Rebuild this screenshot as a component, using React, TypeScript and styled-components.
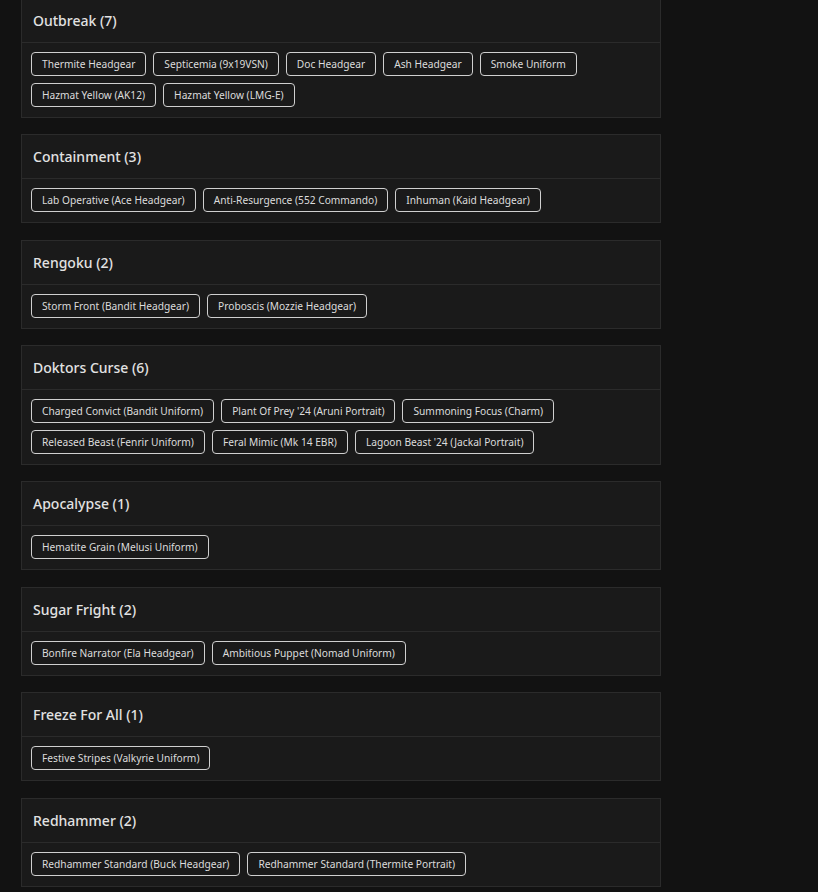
import styled, { createGlobalStyle } from 'styled-components';

const GlobalStyle = createGlobalStyle`
  html, body {
    margin: 0;
    padding: 0;
    background: #121212;
  }
  body {
    font-family: 'Noto Sans', 'DejaVu Sans', sans-serif;
    color: #e4e4e4;
  }
`;

const events = [
  {
    name: 'Outbreak',
    items: [
      'Thermite Headgear',
      'Septicemia (9x19VSN)',
      'Doc Headgear',
      'Ash Headgear',
      'Smoke Uniform',
      'Hazmat Yellow (AK12)',
      'Hazmat Yellow (LMG-E)',
    ],
  },
  {
    name: 'Containment',
    items: [
      'Lab Operative (Ace Headgear)',
      'Anti-Resurgence (552 Commando)',
      'Inhuman (Kaid Headgear)',
    ],
  },
  {
    name: 'Rengoku',
    items: ['Storm Front (Bandit Headgear)', 'Proboscis (Mozzie Headgear)'],
  },
  {
    name: 'Doktors Curse',
    items: [
      'Charged Convict (Bandit Uniform)',
      "Plant Of Prey '24 (Aruni Portrait)",
      'Summoning Focus (Charm)',
      'Released Beast (Fenrir Uniform)',
      'Feral Mimic (Mk 14 EBR)',
      "Lagoon Beast '24 (Jackal Portrait)",
    ],
  },
  {
    name: 'Apocalypse',
    items: ['Hematite Grain (Melusi Uniform)'],
  },
  {
    name: 'Sugar Fright',
    items: ['Bonfire Narrator (Ela Headgear)', 'Ambitious Puppet (Nomad Uniform)'],
  },
  {
    name: 'Freeze For All',
    items: ['Festive Stripes (Valkyrie Uniform)'],
  },
  {
    name: 'Redhammer',
    items: [
      'Redhammer Standard (Buck Headgear)',
      'Redhammer Standard (Thermite Portrait)',
    ],
  },
];

const Page = styled.div`
  width: 640px;
  margin: -2px 0 0 21px;
  display: flex;
  flex-direction: column;
  gap: 16.5px;
`;

const Card = styled.section`
  background: #1a1a1a;
  border: 1px solid #2b2b2b;
`;

const CardHeader = styled.div`
  height: 43px;
  display: flex;
  align-items: center;
  padding: 0 11px;
  border-bottom: 1px solid #2b2b2b;
  font-size: 14px;
  font-weight: 500;
  color: #e2e2e2;
`;

const CardBody = styled.div`
  display: flex;
  flex-wrap: wrap;
  gap: 6.5px 7px;
  padding: 9px 9px 10px;
`;

const Chip = styled.span`
  box-sizing: border-box;
  height: 24px;
  display: inline-flex;
  align-items: center;
  padding: 0 10px;
  border: 1px solid #d0d0d0;
  border-radius: 4px;
  font-size: 10.2px;
  color: #dcdcdc;
  white-space: nowrap;
`;

export default function App() {
  return (
    <>
      <GlobalStyle />
      <Page>
        {events.map((ev) => (
          <Card key={ev.name}>
            <CardHeader>
              {ev.name} ({ev.items.length})
            </CardHeader>
            <CardBody>
              {ev.items.map((item) => (
                <Chip key={item}>{item}</Chip>
              ))}
            </CardBody>
          </Card>
        ))}
      </Page>
    </>
  );
}
